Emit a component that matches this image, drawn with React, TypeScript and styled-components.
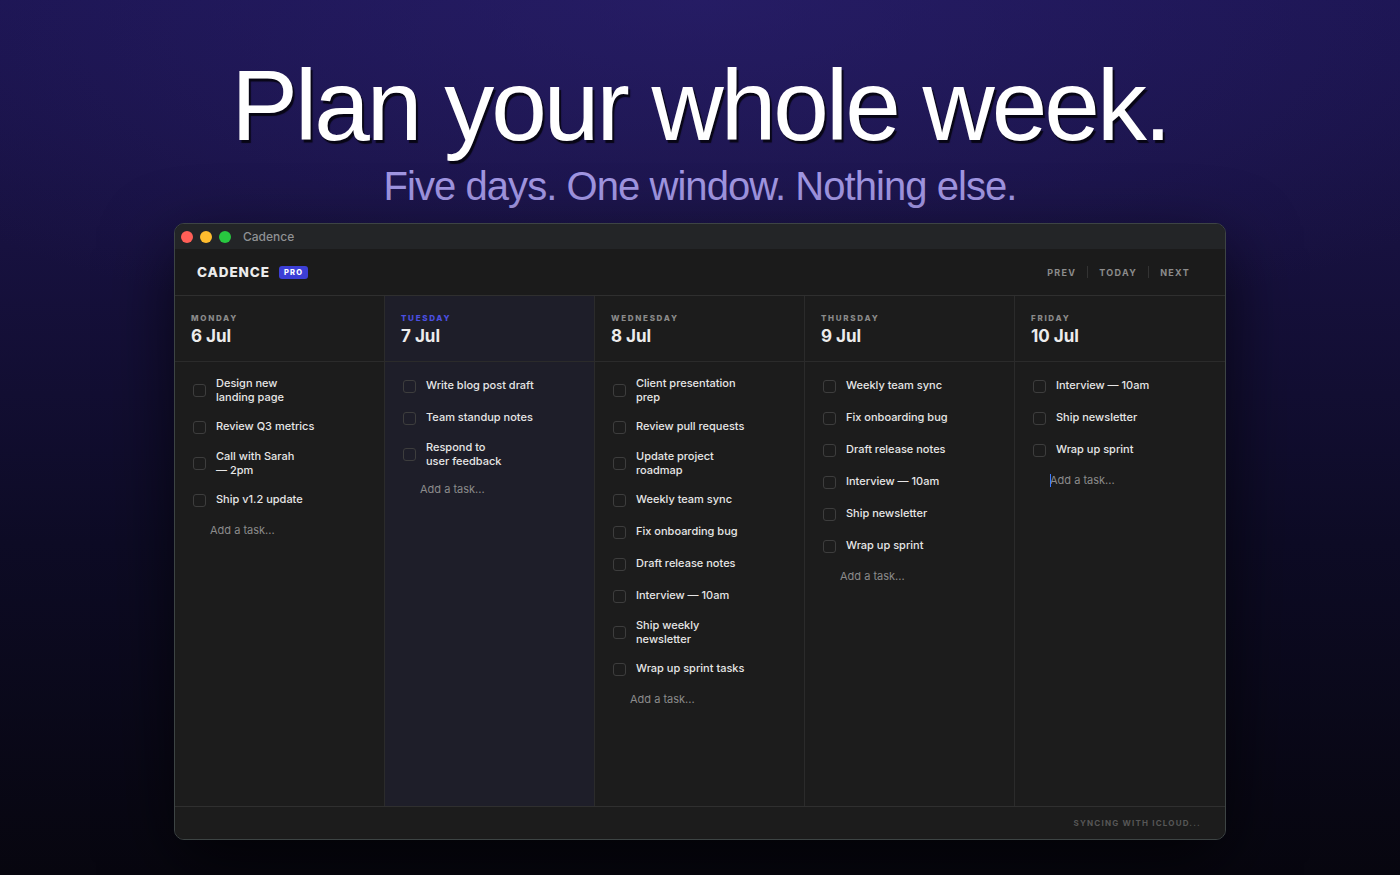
import React from "react";
import styled, { createGlobalStyle, css } from "styled-components";

const GlobalStyle = createGlobalStyle`
  html, body {
    margin: 0;
    padding: 0;
    height: 100%;
  }
  body {
    background: #07060f;
    font-family: Inter, "Liberation Sans", sans-serif;
    -webkit-font-smoothing: antialiased;
  }
  #root {
    min-height: 100%;
  }
`;

interface IDay {
  name: string;
  date: string;
  tasks: string[];
  active?: boolean;
  focused?: boolean;
}

const days: IDay[] = [
  {
    name: "Monday",
    date: "6 Jul",
    tasks: ["Design new\nlanding page", "Review Q3 metrics", "Call with Sarah\n— 2pm", "Ship v1.2 update"],
  },
  {
    name: "Tuesday",
    date: "7 Jul",
    active: true,
    tasks: ["Write blog post draft", "Team standup notes", "Respond to\nuser feedback"],
  },
  {
    name: "Wednesday",
    date: "8 Jul",
    tasks: [
      "Client presentation\nprep",
      "Review pull requests",
      "Update project\nroadmap",
      "Weekly team sync",
      "Fix onboarding bug",
      "Draft release notes",
      "Interview — 10am",
      "Ship weekly\nnewsletter",
      "Wrap up sprint tasks",
    ],
  },
  {
    name: "Thursday",
    date: "9 Jul",
    tasks: [
      "Weekly team sync",
      "Fix onboarding bug",
      "Draft release notes",
      "Interview — 10am",
      "Ship newsletter",
      "Wrap up sprint",
    ],
  },
  {
    name: "Friday",
    date: "10 Jul",
    focused: true,
    tasks: ["Interview — 10am", "Ship newsletter", "Wrap up sprint"],
  },
];

export default function App() {
  return (
    <>
      <GlobalStyle />
      <Page>
        <Headline>Plan your whole week.</Headline>
        <Subline>Five days. One window. Nothing else.</Subline>

        <Window>
          <TitleBar>
            <Light color='#ff5f57' />
            <Light color='#febc2e' />
            <Light color='#28c840' />
            <WindowTitle>Cadence</WindowTitle>
          </TitleBar>

          <AppHeader>
            <Brand>
              CADENCE <ProBadge>PRO</ProBadge>
            </Brand>
            <Nav>
              <NavButton>PREV</NavButton>
              <NavDivider />
              <NavButton>TODAY</NavButton>
              <NavDivider />
              <NavButton>NEXT</NavButton>
            </Nav>
          </AppHeader>

          <Week>
            {days.map((day) => (
              <DayColumn key={day.name} active={day.active}>
                <DayHeader>
                  <DayName active={day.active}>{day.name}</DayName>
                  <DayDate>{day.date}</DayDate>
                </DayHeader>
                <TaskList>
                  {day.tasks.map((task) => (
                    <TaskRow key={task}>
                      <Checkbox />
                      <TaskText>{task}</TaskText>
                    </TaskRow>
                  ))}
                  <AddTask>
                    {day.focused && <Caret />}
                    Add a task...
                  </AddTask>
                </TaskList>
              </DayColumn>
            ))}
          </Week>

          <Footer>SYNCING WITH ICLOUD...</Footer>
        </Window>
      </Page>
    </>
  );
}

const Page = styled.div`
  min-height: 875px;
  box-sizing: border-box;
  padding-top: 55px;
  display: flex;
  flex-direction: column;
  align-items: center;
  background:
    radial-gradient(ellipse 70% 40% at 50% 0%, rgba(48, 36, 120, 0.5), rgba(48, 36, 120, 0) 100%),
    linear-gradient(180deg, #1b1450 0%, #17113f 28%, #0d0b25 62%, #07060f 100%);
`;

const Headline = styled.h1`
  margin: 0;
  font-family: "Liberation Sans", Arial, sans-serif;
  font-weight: 400;
  font-size: 100px;
  line-height: 100px;
  letter-spacing: -3px;
  color: #ffffff;
  text-shadow: 2px 3px 1px rgba(0, 0, 0, 0.75);
`;

const Subline = styled.p`
  margin: 11px 0 0;
  font-family: "Liberation Sans", Arial, sans-serif;
  font-size: 40px;
  line-height: 40px;
  letter-spacing: -0.95px;
  color: #a196e2;
`;

const Window = styled.div`
  margin-top: 17px;
  width: 1052px;
  height: 617px;
  box-sizing: border-box;
  display: flex;
  flex-direction: column;
  border: 1px solid #3d4444;
  border-radius: 10px;
  overflow: hidden;
  background: #1c1c1c;
  box-shadow: 0 24px 70px rgba(0, 0, 0, 0.65);
`;

const TitleBar = styled.div`
  height: 25px;
  flex-shrink: 0;
  display: flex;
  align-items: center;
  gap: 7px;
  padding-left: 6px;
  background: #232527;
`;

const Light = styled.span<{ color: string }>`
  width: 12px;
  height: 12px;
  border-radius: 50%;
  background: ${({ color }) => color};
`;

const WindowTitle = styled.span`
  margin-left: 5px;
  font-size: 12px;
  font-weight: 500;
  color: #8f9194;
`;

const AppHeader = styled.div`
  height: 46px;
  flex-shrink: 0;
  display: flex;
  align-items: center;
  justify-content: space-between;
  padding: 0 35px 0 22px;
  border-bottom: 1px solid #2f2f2f;
  background: #1b1b1b;
`;

const Brand = styled.div`
  display: flex;
  align-items: center;
  gap: 9px;
  font-size: 13.5px;
  font-weight: 800;
  letter-spacing: 0.9px;
  color: #ececec;
`;

const ProBadge = styled.span`
  padding: 2px 5px;
  border-radius: 3px;
  background: #3c3fd6;
  color: #ffffff;
  font-size: 7.5px;
  font-weight: 800;
  letter-spacing: 1.2px;
  line-height: 9px;
`;

const Nav = styled.div`
  display: flex;
  align-items: center;
  gap: 11px;
`;

const NavButton = styled.span`
  font-size: 9px;
  font-weight: 700;
  letter-spacing: 1.3px;
  color: #8c8c8c;
`;

const NavDivider = styled.span`
  width: 1px;
  height: 12px;
  background: #333333;
`;

const Week = styled.div`
  flex: 1;
  display: grid;
  grid-template-columns: repeat(5, 1fr);
  min-height: 0;
`;

const DayColumn = styled.div<{ active?: boolean }>`
  display: flex;
  flex-direction: column;
  border-right: 1px solid #2b2b2b;
  background: #1c1c1c;
  &:last-child {
    border-right: none;
  }
  ${({ active }) =>
    active &&
    css`
      background: #1e1e29;
    `}
`;

const DayHeader = styled.div`
  height: 66px;
  box-sizing: border-box;
  padding: 16px 16px 0;
  border-bottom: 1px solid #2b2b2b;
`;

const DayName = styled.div<{ active?: boolean }>`
  font-size: 8px;
  line-height: 12px;
  font-weight: 800;
  letter-spacing: 1.7px;
  text-transform: uppercase;
  color: ${({ active }) => (active ? "#4b4fe0" : "#8a8a8a")};
`;

const DayDate = styled.div`
  margin-top: 1px;
  font-size: 17px;
  line-height: 22px;
  font-weight: 700;
  color: #ececec;
`;

const TaskList = styled.div`
  display: flex;
  flex-direction: column;
  gap: 14px;
  padding: 15px 16px 0 18px;
`;

const TaskRow = styled.div`
  display: flex;
  align-items: center;
  gap: 10px;
  min-height: 18px;
`;

const Checkbox = styled.span`
  width: 11px;
  height: 11px;
  flex-shrink: 0;
  border: 1px solid #3d3d3d;
  border-radius: 3px;
`;

const TaskText = styled.span`
  font-size: 11px;
  line-height: 13.5px;
  font-weight: 500;
  color: #e6e6e6;
  white-space: pre-line;
`;

const AddTask = styled.div`
  position: relative;
  padding-left: 17px;
  font-size: 11px;
  line-height: 14px;
  color: #8b8b8b;
`;

const Caret = styled.span`
  position: absolute;
  left: 17px;
  top: 1px;
  width: 1px;
  height: 13px;
  background: #3d7bff;
`;

const Footer = styled.div`
  height: 32px;
  flex-shrink: 0;
  display: flex;
  align-items: center;
  justify-content: flex-end;
  padding-right: 24px;
  border-top: 1px solid #2f2f2f;
  background: #1c1c1c;
  font-size: 8px;
  font-weight: 700;
  letter-spacing: 1.2px;
  color: #575757;
`;
